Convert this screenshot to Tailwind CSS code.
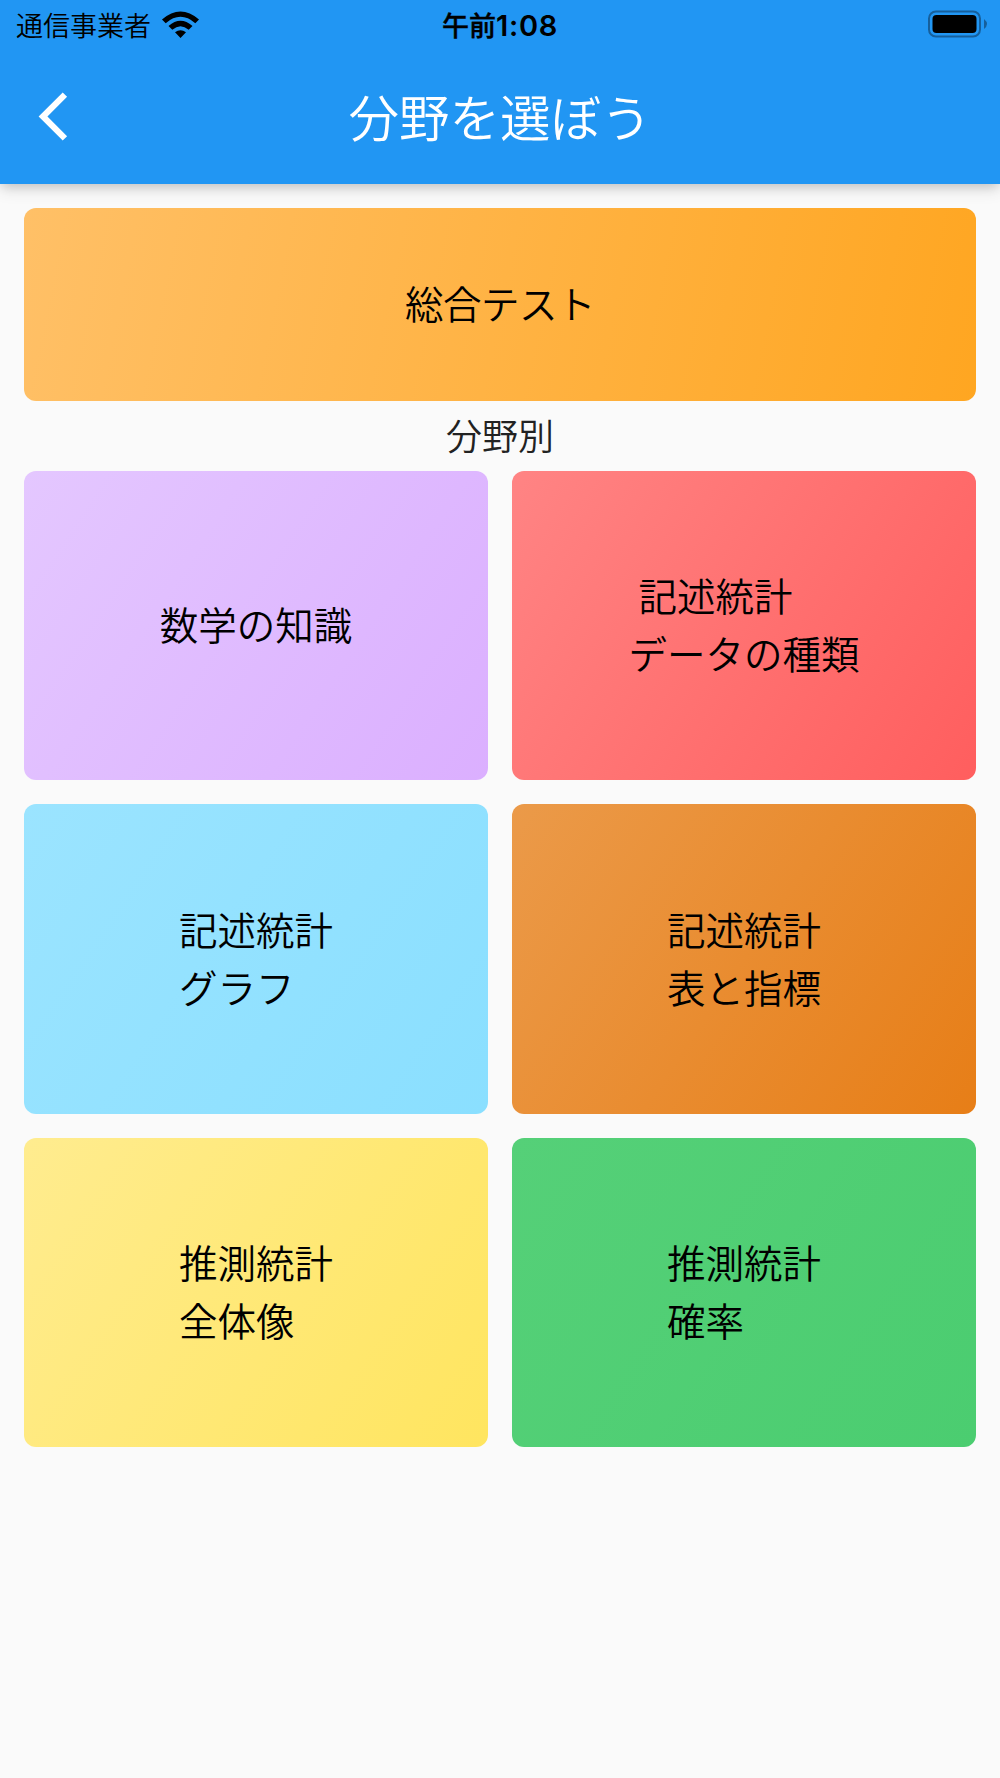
<!DOCTYPE html>
<html lang="ja"><head><meta charset="utf-8"><script src="https://cdn.jsdelivr.net/npm/@tailwindcss/browser@4"></script></head>
<body class="w-[1000px] h-[1778px] overflow-hidden bg-[#fafafa] font-['Noto_Sans_CJK_JP',sans-serif] text-black">
<header class="h-[183.5px] bg-[#2196f3] shadow-[0_4px_10px_-2px_rgba(0,0,0,0.14),0_5px_16px_rgba(0,0,0,0.12)]">
<div class="h-[50px] grid grid-cols-3 items-center">
<div class="flex items-center gap-[10px] pl-4"><span class="text-[27px] font-[350] leading-none whitespace-nowrap -mt-0.5">通信事業者</span>
<svg class="w-[38px] h-[28px] -mt-[3px]" viewBox="161 9 38 28"><path d="M162 18.500Q180.500 2.500 199 18.500L195.300 22.200Q180.500 9.300 165.700 22.200ZM168.500 25Q180.500 14.500 192.500 25L188.700 28.800Q180.500 21.500 172.300 28.800ZM175 31.300Q180.500 27 186 31.300L180.500 37Z"/></svg></div>
<div class="flex items-center justify-center text-[27px] font-medium leading-none -mt-0.5"><span class="[-webkit-text-stroke:0.4px_black]">午前</span><span class="font-['Inter'] font-semibold text-[29px] tracking-[0.7px] pt-0.5">1:08</span></div>
<svg class="justify-self-end mr-[12px] w-[60px] h-[28px] -mt-0.5" viewBox="0 0 60 28"><rect x="1" y="1.500" width="51" height="25" rx="7" fill="none" stroke="#165f9b" stroke-width="2"/><rect x="4.500" y="5" width="44" height="18" rx="4"/><path d="M56 9Q62 14 56 19Z" fill="#165f9b"/></svg>
</div>
<div class="h-[133px] grid grid-cols-[100px_1fr_100px] items-center">
<svg class="ml-[38px] w-[30px] h-[49px] -mt-[1px]" viewBox="0 0 30 49"><path d="M26.900 2.600L5 24.500L26.900 46.400" fill="none" stroke="white" stroke-width="6.200"/></svg>
<h1 class="text-center text-white text-[50.500px] font-[350] leading-none -mt-[3px]">分野を選ぼう</h1></div>
</header>
<main class="px-6 pt-[24.500px] text-[38.500px] leading-[58px] font-[350]">
<div class="h-[193px] rounded-xl bg-linear-[101.5deg] from-[#ffc067] to-[#ffa621] flex items-center justify-center pb-[5px]"><span class="tracking-[-0.5px]">総合テスト</span></div>
<div class="h-[70px] flex items-center justify-center text-[36px] pb-[5px] text-[#222]">分野別</div>
<div class="grid grid-cols-2 gap-6 auto-rows-[309.400px] *:rounded-xl *:flex *:items-center *:justify-center *:bg-linear-[123.7deg] *:pb-[5px]">
<div class="from-[#e4c7ff] to-[#dbafff]">数学の知識</div>
<div class="from-[#ff8484] to-[#ff5e5e]"><p><span class="pl-[10px]">記述統計</span><br>データの種類</p></div>
<div class="from-[#9be4ff] to-[#8adfff]"><p>記述統計<br>グラフ</p></div>
<div class="from-[#eb9a49] to-[#e77e17]"><p>記述統計<br>表と指標</p></div>
<div class="from-[#ffec8f] to-[#ffe55f]"><p>推測統計<br>全体像</p></div>
<div class="from-[#55d078] to-[#4bcd70]"><p>推測統計<br>確率</p></div>
</div></main></body></html>
